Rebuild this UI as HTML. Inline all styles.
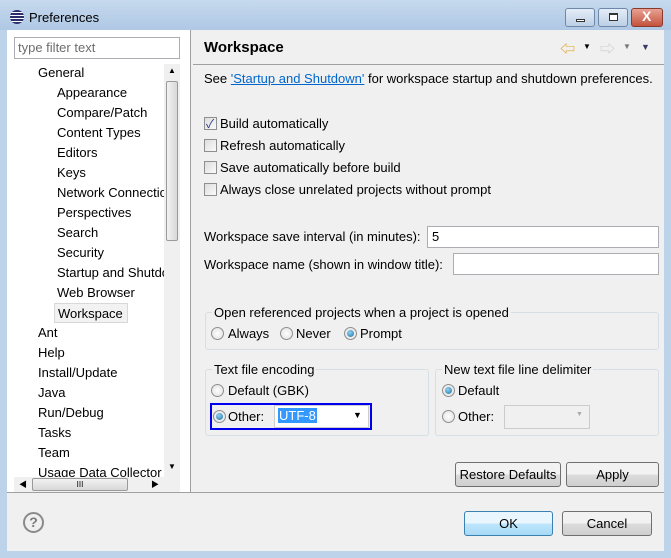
<!DOCTYPE html>
<html><head><meta charset="utf-8"><style>
*{box-sizing:border-box;margin:0;padding:0}
body{width:671px;height:558px;position:relative;overflow:hidden;background:#bcd3ea;font-family:"Liberation Sans","Noto Sans CJK SC",sans-serif;font-size:13px;color:#000}
.a{position:absolute;white-space:nowrap}
.tb{position:absolute;left:0;top:0;width:671px;height:30px;background:linear-gradient(#c6d9ee,#afc8e4)}
.wb{position:absolute;top:8px;height:19px;border:1px solid #6d88a8;border-radius:3px;background:linear-gradient(#e4edf7,#bccfe6)}
.cl{background:linear-gradient(#e8a293,#c3533d);border-color:#8a3a2c}
.cb{position:absolute;width:13px;height:13px;border:1px solid #8f8f8f;background:linear-gradient(135deg,#ddd,#fafafa)}
.rd{position:absolute;width:13px;height:13px;border:1px solid #8f8f8f;border-radius:50%;background:radial-gradient(#fff,#ddd)}
.rd.on::after{content:"";position:absolute;left:2px;top:2px;width:7px;height:7px;border-radius:50%;background:radial-gradient(circle at 40% 35%,#8fd3f5,#1f6fa0)}
.in{position:absolute;background:#fff;border:1px solid #abadb3}
.grp{position:absolute;border:1px solid #d5dfe5;border-radius:3px}
.lg{position:absolute;background:#f0f0f0;padding:0 2px;top:-8px}
.btn{position:absolute;border:1px solid #707070;border-radius:3px;background:linear-gradient(#f2f2f2 50%,#dcdcdc 50%,#cfcfcf);text-align:center;line-height:23px}
.tr{position:absolute;white-space:nowrap}
</style></head><body>
<div class="tb"></div>
<div class="a" style="left:10px;top:10px;width:14px;height:14px;border-radius:50%;background:repeating-linear-gradient(#2c2f6b 0 2px,#fff 2px 3px);"></div>
<div class="a" style="left:29px;top:10px;font-size:13px">Preferences</div>
<div class="wb" style="left:565px;width:30px"><div class="a" style="left:10px;top:10px;width:9px;height:3px;border:1px solid #333;background:#fff"></div></div>
<div class="wb" style="left:598px;width:30px"><div class="a" style="left:10px;top:4px;width:9px;height:8px;border:1px solid #333;border-top-width:2px;background:#fff"></div></div>
<div class="wb cl" style="left:631px;width:32px"><div class="a" style="left:10px;top:-1px;color:#fff;font-weight:bold;font-size:14px">X</div></div>

<div class="a" style="left:7px;top:30px;width:657px;height:521px;background:#f0f0f0"></div>
<div class="a" style="left:7px;top:30px;width:183px;height:463px;background:#fff"></div>
<div class="a" style="left:190px;top:30px;width:1px;height:463px;background:#a0a0a0"></div>
<div class="a" style="left:193px;top:64px;width:471px;height:1px;background:#a0a0a0"></div>
<div class="a" style="left:7px;top:492px;width:657px;height:1px;background:#a0a0a0"></div>

<div class="in" style="left:14px;top:37px;width:166px;height:22px"></div>
<div class="a" style="left:18px;top:40px;color:#6d6d6d">type filter text</div>
<div class="a" style="left:7px;top:64px;width:157px;height:413px;overflow:hidden">
<div class="tr" style="left:31px;top:1px">General</div>
<div class="tr" style="left:50px;top:21px">Appearance</div>
<div class="tr" style="left:50px;top:41px">Compare/Patch</div>
<div class="tr" style="left:50px;top:61px">Content Types</div>
<div class="tr" style="left:50px;top:81px">Editors</div>
<div class="tr" style="left:50px;top:101px">Keys</div>
<div class="tr" style="left:50px;top:121px">Network Connections</div>
<div class="tr" style="left:50px;top:141px">Perspectives</div>
<div class="tr" style="left:50px;top:161px">Search</div>
<div class="tr" style="left:50px;top:181px">Security</div>
<div class="tr" style="left:50px;top:201px">Startup and Shutdown</div>
<div class="tr" style="left:50px;top:221px">Web Browser</div>
<div class="tr" style="left:47px;top:239px;width:74px;height:20px;border:1px solid #d8d8d8;background:#f2f2f2;padding:2px 3px">Workspace</div>
<div class="tr" style="left:31px;top:261px">Ant</div>
<div class="tr" style="left:31px;top:281px">Help</div>
<div class="tr" style="left:31px;top:301px">Install/Update</div>
<div class="tr" style="left:31px;top:321px">Java</div>
<div class="tr" style="left:31px;top:341px">Run/Debug</div>
<div class="tr" style="left:31px;top:361px">Tasks</div>
<div class="tr" style="left:31px;top:381px">Team</div>
<div class="tr" style="left:31px;top:401px">Usage Data Collector</div>
</div>
<div class="a" style="left:164px;top:64px;width:16px;height:413px;background:#f0f0f0"></div>
<div class="a" style="left:166px;top:81px;width:12px;height:160px;border:1px solid #9a9a9a;border-radius:2px;background:linear-gradient(90deg,#f2f2f2,#d8d8d8)"></div>
<div class="a" style="left:168px;top:66px;font-size:8px">▲</div>
<div class="a" style="left:168px;top:462px;font-size:8px">▼</div>
<div class="a" style="left:14px;top:477px;width:166px;height:15px;background:#f0f0f0"></div>
<div class="a" style="left:32px;top:478px;width:96px;height:13px;border:1px solid #9a9a9a;border-radius:2px;background:linear-gradient(#f2f2f2,#d8d8d8);text-align:center;font-size:8px;line-height:11px">III</div>
<div class="a" style="left:19px;top:479px;font-size:8px">◀</div>
<div class="a" style="left:151px;top:479px;font-size:8px">▶</div>

<div class="a" style="left:204px;top:39px;font-size:15px;font-weight:bold">Workspace</div>
<div class="a" style="left:560px;top:38px;color:#e0a020;font-size:15px">⇦</div>
<div class="a" style="left:583px;top:42px;font-size:8px">▼</div>
<div class="a" style="left:600px;top:38px;color:#ccc;font-size:15px">⇨</div>
<div class="a" style="left:623px;top:42px;font-size:8px;color:#777">▼</div>
<div class="a" style="left:641px;top:42px;font-size:9px;color:#3a3a6a">▼</div>

<div class="a" style="left:204px;top:71px">See <span style="color:#0066cc;text-decoration:underline">'Startup and Shutdown'</span> for workspace startup and shutdown preferences.</div>
<div class="cb" style="left:204px;top:117px"><span class="a" style="left:1px;top:-3px;font-size:12px;color:#2a3a8a">✓</span></div><div class="a" style="left:220px;top:116px">Build automatically</div>
<div class="cb" style="left:204px;top:139px"></div><div class="a" style="left:220px;top:138px">Refresh automatically</div>
<div class="cb" style="left:204px;top:161px"></div><div class="a" style="left:220px;top:160px">Save automatically before build</div>
<div class="cb" style="left:204px;top:183px"></div><div class="a" style="left:220px;top:182px">Always close unrelated projects without prompt</div>

<div class="a" style="left:204px;top:229px">Workspace save interval (in minutes):</div>
<div class="in" style="left:427px;top:226px;width:232px;height:22px"></div>
<div class="a" style="left:432px;top:229px">5</div>
<div class="a" style="left:204px;top:257px">Workspace name (shown in window title):</div>
<div class="in" style="left:453px;top:253px;width:206px;height:22px"></div>

<div class="grp" style="left:205px;top:312px;width:454px;height:38px"><span class="lg" style="left:6px">Open referenced projects when a project is opened</span></div>
<div class="rd" style="left:211px;top:327px"></div><div class="a" style="left:228px;top:326px">Always</div>
<div class="rd" style="left:280px;top:327px"></div><div class="a" style="left:296px;top:326px">Never</div>
<div class="rd on" style="left:344px;top:327px"></div><div class="a" style="left:360px;top:326px">Prompt</div>

<div class="grp" style="left:205px;top:369px;width:224px;height:67px"><span class="lg" style="left:6px">Text file encoding</span></div>
<div class="rd" style="left:211px;top:384px"></div><div class="a" style="left:228px;top:383px">Default (GBK)</div>
<div class="a" style="left:210px;top:403px;width:162px;height:27px;border:2px solid #0000ee"></div>
<div class="rd on" style="left:213px;top:410px"></div><div class="a" style="left:228px;top:409px">Other:</div>
<div class="in" style="left:274px;top:405px;width:95px;height:23px;border-color:#ccc"></div>
<div class="a" style="left:278px;top:408px;background:#3399ff;color:#fff;padding:0 1px">UTF-8</div>
<div class="a" style="left:353px;top:410px;font-size:9px">▼</div>

<div class="grp" style="left:435px;top:369px;width:224px;height:67px"><span class="lg" style="left:6px">New text file line delimiter</span></div>
<div class="rd on" style="left:442px;top:384px"></div><div class="a" style="left:458px;top:383px">Default</div>
<div class="rd" style="left:442px;top:410px"></div><div class="a" style="left:458px;top:409px">Other:</div>
<div class="in" style="left:504px;top:405px;width:86px;height:24px;border-color:#ccc;background:#f0f0f0"></div>
<div class="a" style="left:576px;top:411px;font-size:7px;color:#aaa">▼</div>

<div class="btn" style="left:455px;top:462px;width:106px;height:25px">Restore Defaults</div>
<div class="btn" style="left:566px;top:462px;width:93px;height:25px">Apply</div>
<div class="btn" style="left:464px;top:511px;width:89px;height:25px;border-color:#3c7fb1;background:linear-gradient(#eaf6fd 50%,#bee6fd 50%,#a7d9f5)">OK</div>
<div class="btn" style="left:562px;top:511px;width:90px;height:25px">Cancel</div>

<div class="a" style="left:23px;top:512px;width:21px;height:21px;border:2px solid #8a8a8a;border-radius:50%;text-align:center;font-weight:bold;color:#7a7a7a;font-size:14px;line-height:17px">?</div>
</body></html>
